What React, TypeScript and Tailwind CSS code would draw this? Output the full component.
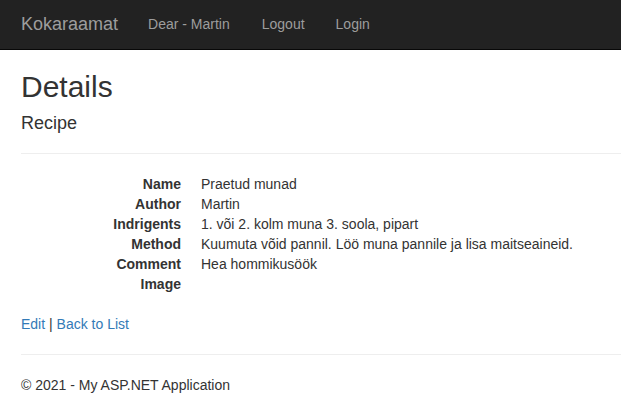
import React from "react";

const rows: [string, string][] = [
  ["Name", "Praetud munad"],
  ["Author", "Martin"],
  ["Indrigents", "1. või 2. kolm muna 3. soola, pipart"],
  ["Method", "Kuumuta võid pannil. Löö muna pannile ja lisa maitseaineid."],
  ["Comment", "Hea hommikusöök"],
  ["Image", ""],
];

export default function App() {
  return (
    <div
      className="min-h-[414px] bg-white text-[14px] leading-[20px] text-[#333]"
      style={{ fontFamily: '"Liberation Sans", Arial, sans-serif' }}
    >
      <nav className="flex h-[50px] items-center border-b border-[#080808] bg-[#222] pb-[2px] pl-[6px]">
        <a className="px-[15px] text-[18px] leading-[20px] text-[#9d9d9d]">Kokaraamat</a>
        <a className="px-[15px] text-[#9d9d9d]">Dear - Martin</a>
        <a className="ml-[2px] px-[15px] text-[#9d9d9d]">Logout</a>
        <a className="ml-[1px] px-[15px] text-[#9d9d9d]">Login</a>
      </nav>
      <div className="pl-[21px]">
        <h2 className="mt-[20px] text-[30px] leading-[33px] font-normal">Details</h2>
        <h4 className="mt-[10px] text-[18px] leading-[20px] font-normal">Recipe</h4>
        <hr className="mt-[20px] mb-[20px] border-t border-[#eee]" />
        <dl className="mb-[20px]">
          {rows.map(([k, v]) => (
            <div key={k} className="flex h-[20px]">
              <dt className="w-[160px] shrink-0 text-right font-bold">{k}</dt>
              <dd className="ml-[20px]">{v}</dd>
            </div>
          ))}
        </dl>
        <p className="mb-[10px]">
          <a className="text-[#337ab7]">Edit</a> | <a className="text-[#337ab7]">Back to List</a>
        </p>
        <hr className="mt-[20px] mb-[20px] border-t border-[#eee]" />
        <footer>
          <p>© 2021 - My ASP.NET Application</p>
        </footer>
      </div>
    </div>
  );
}
